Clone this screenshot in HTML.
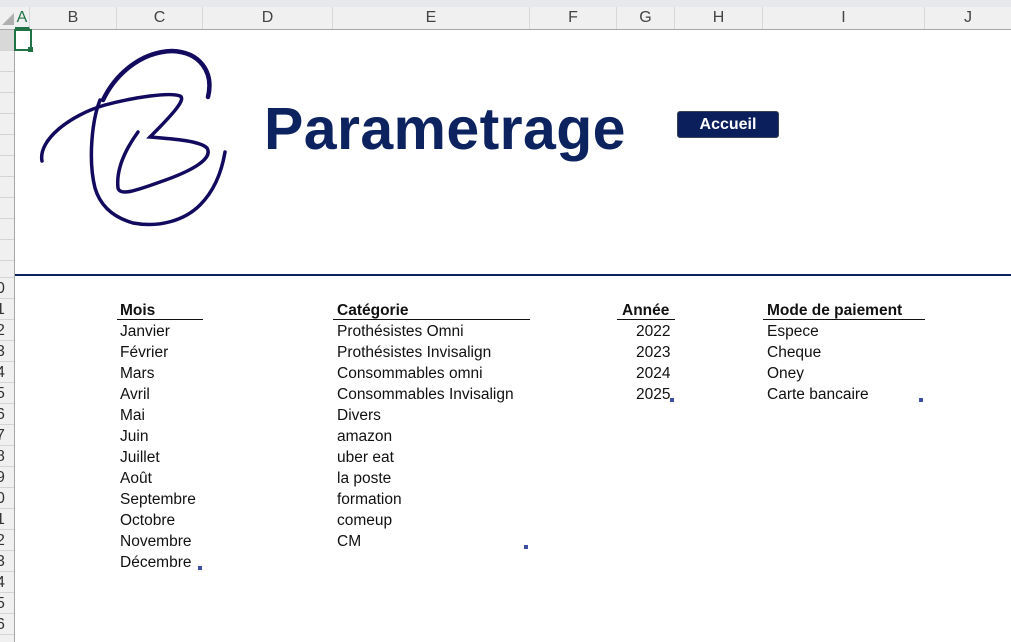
<!DOCTYPE html>
<html><head><meta charset="utf-8"><style>
*{margin:0;padding:0;box-sizing:border-box}
body{width:1011px;height:642px;overflow:hidden;background:#fff;position:relative;font-family:"Liberation Sans",sans-serif}
.top{position:absolute;left:0;top:0;width:1011px;height:7px;background:#e6e8ec}
.hdr{position:absolute;left:0;top:7px;width:1011px;height:23px;background:#f0f0f0;border-bottom:1px solid #a8a8a8}
.ch{position:absolute;top:0;height:22px;line-height:22px;text-align:center;font-size:16px;color:#444;border-right:1px solid #d8d8d8}
.gut{position:absolute;left:0;top:30px;width:15px;height:612px;background:#f0f0f0;border-right:1px solid #a8a8a8;overflow:hidden}
.rl{position:absolute;left:0;width:14px;border-bottom:1px solid #d4d4d4;font-size:16px;color:#333;line-height:21px}
.t{position:absolute;font-size:15.5px;color:#111;line-height:21px;white-space:nowrap}
.b{font-weight:bold}
.ul{position:absolute;height:1px;background:#111;top:319px}
.h{position:absolute;width:4px;height:4px;background:#4050a0}
</style></head><body>
<div class="top"></div>
<div class="hdr">
<div style="position:absolute;top:6px;width:0;height:0;border-left:12px solid transparent;border-bottom:12px solid #b0b0b0;left:2px"></div>
<div class="ch" style="left:15px;width:15px;color:#217346;border-bottom:2px solid #217346">A</div>
<div class="ch" style="left:30px;width:87px">B</div>
<div class="ch" style="left:117px;width:86px">C</div>
<div class="ch" style="left:203px;width:130px">D</div>
<div class="ch" style="left:333px;width:197px">E</div>
<div class="ch" style="left:530px;width:87px">F</div>
<div class="ch" style="left:617px;width:58px">G</div>
<div class="ch" style="left:675px;width:88px">H</div>
<div class="ch" style="left:763px;width:162px">I</div>
<div class="ch" style="left:925px;width:86px;border:none">J</div>
</div>
<div class="gut">
<div class="rl" style="top:0;height:21px;background:#d8d8d8"></div>
<div class="rl" style="top:21px;height:21px"></div>
<div class="rl" style="top:42px;height:21px"></div>
<div class="rl" style="top:63px;height:21px"></div>
<div class="rl" style="top:84px;height:21px"></div>
<div class="rl" style="top:105px;height:21px"></div>
<div class="rl" style="top:126px;height:21px"></div>
<div class="rl" style="top:147px;height:21px"></div>
<div class="rl" style="top:168px;height:21px"></div>
<div class="rl" style="top:189px;height:21px"></div>
<div class="rl" style="top:210px;height:21px"></div>
<div class="rl" style="top:231px;height:17px"></div>
<div class="rl" style="top:248px;height:21px;text-indent:-4px">0</div>
<div class="rl" style="top:269px;height:21px;text-indent:-4px">1</div>
<div class="rl" style="top:290px;height:21px;text-indent:-4px">2</div>
<div class="rl" style="top:311px;height:21px;text-indent:-4px">3</div>
<div class="rl" style="top:332px;height:21px;text-indent:-4px">4</div>
<div class="rl" style="top:353px;height:21px;text-indent:-4px">5</div>
<div class="rl" style="top:374px;height:21px;text-indent:-4px">6</div>
<div class="rl" style="top:395px;height:21px;text-indent:-4px">7</div>
<div class="rl" style="top:416px;height:21px;text-indent:-4px">8</div>
<div class="rl" style="top:437px;height:21px;text-indent:-4px">9</div>
<div class="rl" style="top:458px;height:21px;text-indent:-4px">0</div>
<div class="rl" style="top:479px;height:21px;text-indent:-4px">1</div>
<div class="rl" style="top:500px;height:21px;text-indent:-4px">2</div>
<div class="rl" style="top:521px;height:21px;text-indent:-4px">3</div>
<div class="rl" style="top:542px;height:21px;text-indent:-4px">4</div>
<div class="rl" style="top:563px;height:21px;text-indent:-4px">5</div>
<div class="rl" style="top:584px;height:21px;text-indent:-4px">6</div>
</div>
<div style="position:absolute;left:14px;top:29px;width:18px;height:22px;border:2px solid #217346"></div>
<div style="position:absolute;left:28px;top:47px;width:5px;height:5px;background:#217346"></div>

<svg style="position:absolute;left:0;top:0" width="260" height="240" fill="none" stroke="#120a5e" stroke-linecap="round">
<path d="M103,100 C115,75 140,52 172,51 C200,52 214,72 208,97" stroke-width="4.5"/>
<path d="M42,161 C38,140 70,115 105,105 C135,97 170,92 180,96 C186,99 175,112 150,137 C175,139 200,141 207,148 C213,158 195,170 160,182 C135,191 120,196 118,188 C116,170 125,150 138,132" stroke-width="3.5"/>
<path d="M100,100 C92,120 88,160 95,188 C100,205 112,217 133,223 C160,228 185,220 200,205 C215,190 222,170 225,152" stroke-width="3.5"/>
</svg>

<div style="position:absolute;left:264px;top:95px;font-size:59px;font-weight:bold;color:#0d2360;letter-spacing:0.4px">Parametrage</div>
<div style="position:absolute;left:677px;top:111px;width:102px;height:27px;background:#0b1f5c;border:1.5px solid #3a4256;border-radius:3px;color:#fff;font-weight:bold;font-size:16px;text-align:center;line-height:25px">Accueil</div>

<div style="position:absolute;left:15px;top:274px;width:996px;height:2px;background:#0d2360"></div>

<div class="t b" style="left:120px;top:300px">Mois</div>
<div class="ul" style="left:117px;width:86px"></div>
<div class="t" style="left:120px;top:321px">Janvier</div>
<div class="t" style="left:120px;top:342px">Février</div>
<div class="t" style="left:120px;top:363px">Mars</div>
<div class="t" style="left:120px;top:384px">Avril</div>
<div class="t" style="left:120px;top:405px">Mai</div>
<div class="t" style="left:120px;top:426px">Juin</div>
<div class="t" style="left:120px;top:447px">Juillet</div>
<div class="t" style="left:120px;top:468px">Août</div>
<div class="t" style="left:120px;top:489px">Septembre</div>
<div class="t" style="left:120px;top:510px">Octobre</div>
<div class="t" style="left:120px;top:531px">Novembre</div>
<div class="t" style="left:120px;top:552px">Décembre</div>
<div class="h" style="left:198px;top:566px"></div>

<div class="t b" style="left:337px;top:300px">Catégorie</div>
<div class="ul" style="left:333px;width:197px"></div>
<div class="t" style="left:337px;top:321px">Prothésistes Omni</div>
<div class="t" style="left:337px;top:342px">Prothésistes Invisalign</div>
<div class="t" style="left:337px;top:363px">Consommables omni</div>
<div class="t" style="left:337px;top:384px">Consommables Invisalign</div>
<div class="t" style="left:337px;top:405px">Divers</div>
<div class="t" style="left:337px;top:426px">amazon</div>
<div class="t" style="left:337px;top:447px">uber eat</div>
<div class="t" style="left:337px;top:468px">la poste</div>
<div class="t" style="left:337px;top:489px">formation</div>
<div class="t" style="left:337px;top:510px">comeup</div>
<div class="t" style="left:337px;top:531px">CM</div>
<div class="h" style="left:524px;top:545px"></div>

<div class="t b" style="left:622px;top:300px">Année</div>
<div class="ul" style="left:617px;width:58px"></div>
<div class="t" style="left:636px;top:321px">2022</div>
<div class="t" style="left:636px;top:342px">2023</div>
<div class="t" style="left:636px;top:363px">2024</div>
<div class="t" style="left:636px;top:384px">2025</div>
<div class="h" style="left:670px;top:398px"></div>

<div class="t b" style="left:767px;top:300px">Mode de paiement</div>
<div class="ul" style="left:763px;width:162px"></div>
<div class="t" style="left:767px;top:321px">Espece</div>
<div class="t" style="left:767px;top:342px">Cheque</div>
<div class="t" style="left:767px;top:363px">Oney</div>
<div class="t" style="left:767px;top:384px">Carte bancaire</div>
<div class="h" style="left:919px;top:398px"></div>
</body></html>
